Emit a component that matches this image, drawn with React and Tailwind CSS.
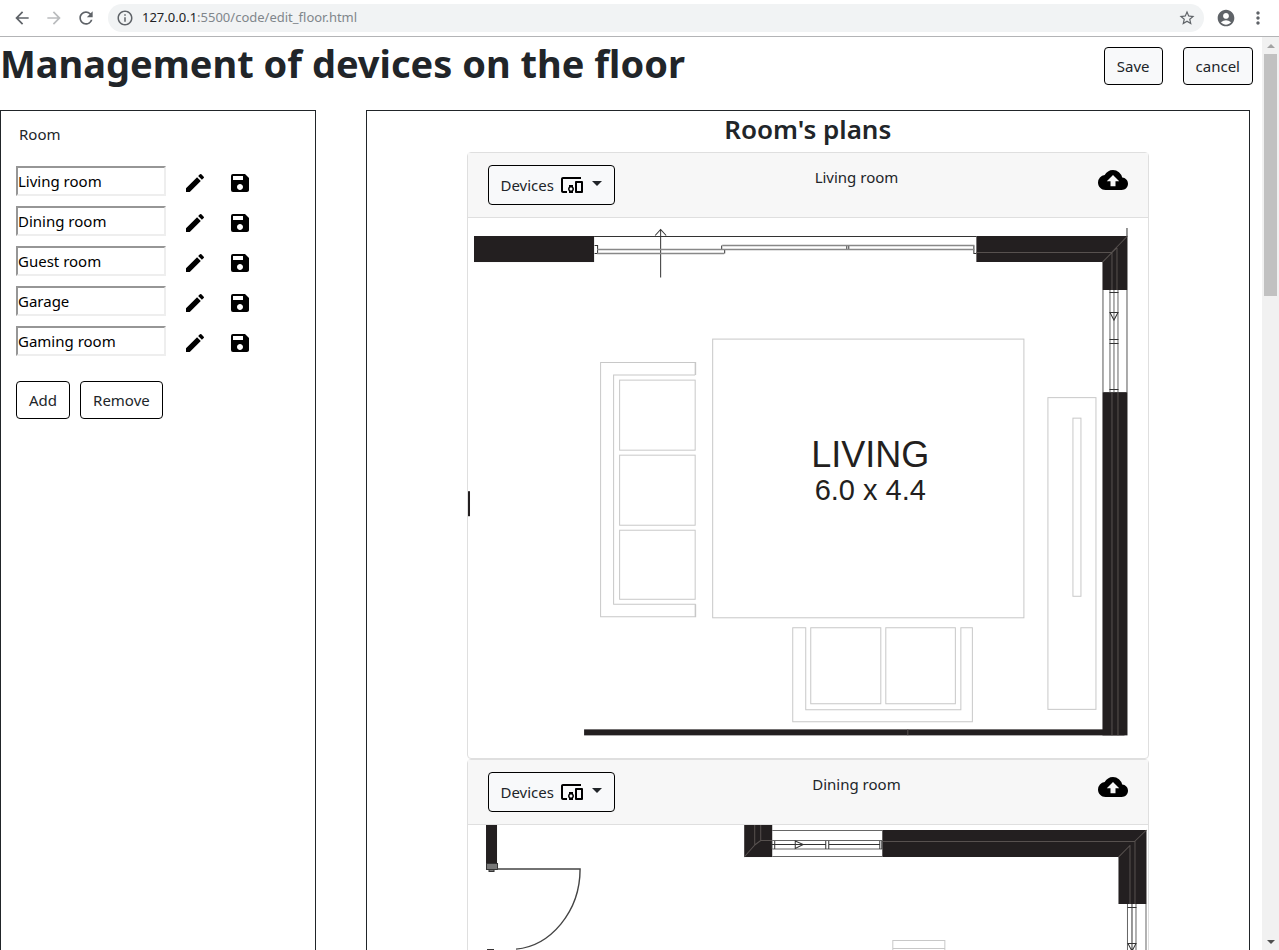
import React from "react";
import {
  MdArrowBack, MdArrowForward, MdRefresh, MdInfoOutline, MdStarBorder,
  MdAccountCircle, MdMoreVert, MdEdit, MdSave, MdCloudUpload, MdDevicesOther,
} from "react-icons/md";

const rooms = ["Living room", "Dining room", "Guest room", "Garage", "Gaming room"];

function BrowserBar() {
  return (
    <div className="flex h-[37px] shrink-0 items-center border-b border-[#b3b4b6] bg-white pr-[11px] pl-3 text-[#5f6368]">
      <button aria-label="Back" className="mr-3"><MdArrowBack size={20} /></button>
      <button aria-label="Forward" className="mr-3 text-[#babcbe]"><MdArrowForward size={20} /></button>
      <button aria-label="Reload" className="mr-3"><MdRefresh size={20} /></button>
      <div className="flex h-7 flex-1 items-center rounded-full bg-[#f1f3f4] px-2">
        <MdInfoOutline size={18} className="mr-2 shrink-0" />
        <span className="flex-1 font-['Noto_Sans',sans-serif] text-[13px] text-[#80868b]">
          <span className="text-[#202124]">127.0.0.1</span>:5500/code/edit_floor.html
        </span>
        <button aria-label="Bookmark"><MdStarBorder size={18} /></button>
      </div>
      <button aria-label="Profile" className="ml-3"><MdAccountCircle size={20} /></button>
      <button aria-label="Menu" className="ml-3"><MdMoreVert size={20} /></button>
    </div>
  );
}

function OutlineButton({ children, className = "" }) {
  return (
    <button className={`flex h-[38px] items-center rounded border border-black px-3 text-[15px] text-[#212529] ${className}`}>
      {children}
    </button>
  );
}

function RoomList() {
  return (
    <aside className="w-1/4 shrink-0 border border-b-0 border-[#212529] px-[15px] pt-3">
      <h2 className="pl-[3px] text-[15px] leading-[22px]">Room</h2>
      <ul className="mt-[21px] flex flex-col gap-[10px]">
        {rooms.map((room) => (
          <li key={room} className="flex h-[30px] items-center">
            <input
              aria-label={room}
              defaultValue={room}
              className="h-[30px] w-[150px] border-2 border-t-[#969696] border-r-[#eeeeee] border-b-[#eeeeee] border-l-[#969696] bg-white text-[15px] text-black"
            />
            <button aria-label={`Edit ${room}`} className="mt-1 ml-[17px] text-black"><MdEdit size={24} /></button>
            <button aria-label={`Save ${room}`} className="mt-1 ml-[21px] text-black"><MdSave size={24} /></button>
          </li>
        ))}
      </ul>
      <div className="mt-[25px] flex gap-[10px]">
        <OutlineButton>Add</OutlineButton>
        <OutlineButton>Remove</OutlineButton>
      </div>
    </aside>
  );
}

function LivingPlan() {
  return (
    <svg viewBox="468 218 680 540" className="block w-full" fill="none" role="img" aria-label="Living room plan">
      <g fill="#231f20">
        <rect x="474" y="236" width="120" height="26" />
        <path d="M976 236H1127V290H1102V262H976Z" />
        <rect x="1102" y="392" width="25" height="343" />
        <rect x="584" y="729" width="540" height="6" />
        <rect x="468" y="491" width="2" height="25" />
      </g>
      <g stroke="#57514f">
        <path d="M976 252.5H1111L1127 236M1102 262L1116.500 247.500M1111.500 252V290M1116.500 248V290M1111.500 392V735M1117.500 392V735M907.500 729V735" />
      </g>
      <g stroke="#333">
        <path d="M594 236.500H976M660.500 230V277.500M655 235.500L660.500 229.500L666 235.500" />
        <path d="M1126.500 228V236M594.500 245.500H597.500V253.500H594.500M721.500 250V245.500M724.500 249V253.500M973.500 245.500V253.500H976M846.500 245.500H848.500V249.500H846.500Z" />
      </g>
      <g stroke="#888" strokeWidth="1.400">
        <path d="M597 249.500H724M597 253.500H724M722 245.500H974M722 249.500H974M1102.500 290V392M1126.500 290V392" />
      </g>
      <g stroke="#666">
        <path d="M1109.500 290V392M1117.500 290V392M1113.500 290V392" />
        <path stroke="#333" d="M1109 292.500H1118M1109 389.500H1118M1109 339.500H1118M1109 343.500H1118M1109.500 312.500H1117.500L1113.500 320Z" />
      </g>
      <g stroke="#c8c8c8">
        <rect x="712.500" y="339" width="311" height="278.500" />
        <path d="M695 375V362.500H600.500V616.500H695V604H613.500V375H695M695.500 362V375M695.500 604V617" />
        <rect x="619.500" y="380" width="75.500" height="70" />
        <rect x="619.500" y="455" width="75.500" height="70" />
        <rect x="619.500" y="530" width="75.500" height="69" />
        <path d="M792.500 627.500H805.500V709.500H960.500V627.500H972V721.500H792.500Z" />
        <path d="M810.500 627.500H880.500V703.500H810.500ZM885.500 627.500H955V703.500H885.500Z" />
        <rect x="1047.500" y="397.500" width="48" height="311.500" />
        <rect x="1072.500" y="418" width="8" height="178" />
      </g>
      <g fill="#231f20" textAnchor="middle" className="font-['Liberation_Sans',sans-serif]">
        <text x="870" y="467" fontSize="36">LIVING</text>
        <text x="870" y="500" fontSize="29">6.0 x 4.4</text>
      </g>
    </svg>
  );
}

function DiningPlan() {
  return (
    <svg viewBox="468 825 680 540" className="block w-full" fill="none" role="img" aria-label="Dining room plan">
      <g fill="#231f20">
        <rect x="486" y="825" width="11" height="40" />
        <rect x="744" y="825" width="28" height="32" />
        <path d="M882 830H1146V904H1118V857H882Z" />
        <path d="M487 949H494V960H487Z" />
      </g>
      <path fill="#777" stroke="#333" d="M486.500 863.500H497.500V869.500H486.500ZM489 869.500H494V871.500H489Z" />
      <g stroke="#57514f">
        <path d="M754.500 825V845L744 857M760.500 825V840.500H772M754.500 845L760.500 840.500M882 841.500H1134L1146 830M1118 857L1129.500 845.500M1129.500 845V904M1134.500 841V904" />
      </g>
      <path stroke="#444" strokeWidth="1.400" d="M497 869H580C580 912 550 946 516 949" />
      <g stroke="#666">
        <path d="M772 830.500H882M772 856.500H882M772 840.500H882M772 849H882M1145.500 904V1020M1127 904V1020M1135.500 904V1020" />
        <path stroke="#333" d="M772 844.500H825M829 844.500H880M771.500 841V849M774.500 841V849M825.500 841V849M828.500 841V849M879.500 841V849M881.500 841V849M795 841L803 844.500L795 848.500ZM1127 907.500H1136M1131.500 904V1020M1127.500 943.500H1135.500L1131.500 951Z" />
      </g>
      <path stroke="#c8c8c8" d="M892.500 980V940.500H944.500V980M892.500 948.500H944.500" />
    </svg>
  );
}

function PlanCard({ name, children }) {
  return (
    <article className="rounded border border-[#dfdfdf] bg-white">
      <header className="flex h-[65px] items-start justify-between border-b border-[#dfdfdf] bg-[#f7f7f7] px-5 pt-3">
        <button className="flex h-10 items-center rounded border border-black bg-[#f8f9fa] px-3 text-[15px] text-[#212529]">
          Devices
          <MdDevicesOther size={24} className="ml-1.5 text-black" />
          <svg viewBox="0 0 10 5" className="mb-1 ml-2 h-[5px] w-[10px]"><path d="M0 0H10L5 5Z" fill="#212529" /></svg>
        </button>
        <h3 className="text-[15px] leading-6">{name}</h3>
        <button aria-label={`Upload ${name} plan`} className="text-black"><MdCloudUpload size={30} /></button>
      </header>
      {children}
    </article>
  );
}

function Scrollbar() {
  return (
    <div aria-hidden="true" className="flex w-[17px] shrink-0 flex-col items-center bg-[#f1f1f1]">
      <div className="flex h-[17px] items-center"><svg viewBox="0 0 8 4" className="h-1 w-2"><path d="M0 4H8L4 0Z" fill="#a3a3a3" /></svg></div>
      <div className="h-[242px] w-[13px] bg-[#c1c1c1]" />
      <div className="mt-auto flex h-[17px] items-center"><svg viewBox="0 0 8 4" className="h-1 w-2"><path d="M0 0H8L4 4Z" fill="#505050" /></svg></div>
    </div>
  );
}

export default function App() {
  return (
    <div className="flex h-screen flex-col overflow-hidden bg-white font-['Noto_Sans',sans-serif] text-[#212529]">
      <BrowserBar />
      <div className="flex min-h-0 flex-1">
        <div className="flex min-w-0 flex-1 flex-col overflow-hidden">
          <header className="flex h-[73px] shrink-0 items-start justify-between pr-[9px]">
            <h1 className="text-[38px] leading-[52px] font-bold">Management of devices on the floor</h1>
            <div className="flex gap-5 pt-[10px]">
              <OutlineButton className="bg-[#f8f9fa]">Save</OutlineButton>
              <OutlineButton className="bg-[#f8f9fa]">cancel</OutlineButton>
            </div>
          </header>
          <div className="flex min-h-0 flex-1">
            <RoomList />
            <main className="mr-3 ml-[50px] min-w-0 flex-1 border border-b-0 border-[#212529] px-[100px]">
              <h2 className="pb-[5px] text-center text-[26px] leading-9 font-semibold">Room's plans</h2>
              <PlanCard name="Living room"><LivingPlan /></PlanCard>
              <PlanCard name="Dining room"><DiningPlan /></PlanCard>
            </main>
          </div>
        </div>
        <Scrollbar />
      </div>
    </div>
  );
}
